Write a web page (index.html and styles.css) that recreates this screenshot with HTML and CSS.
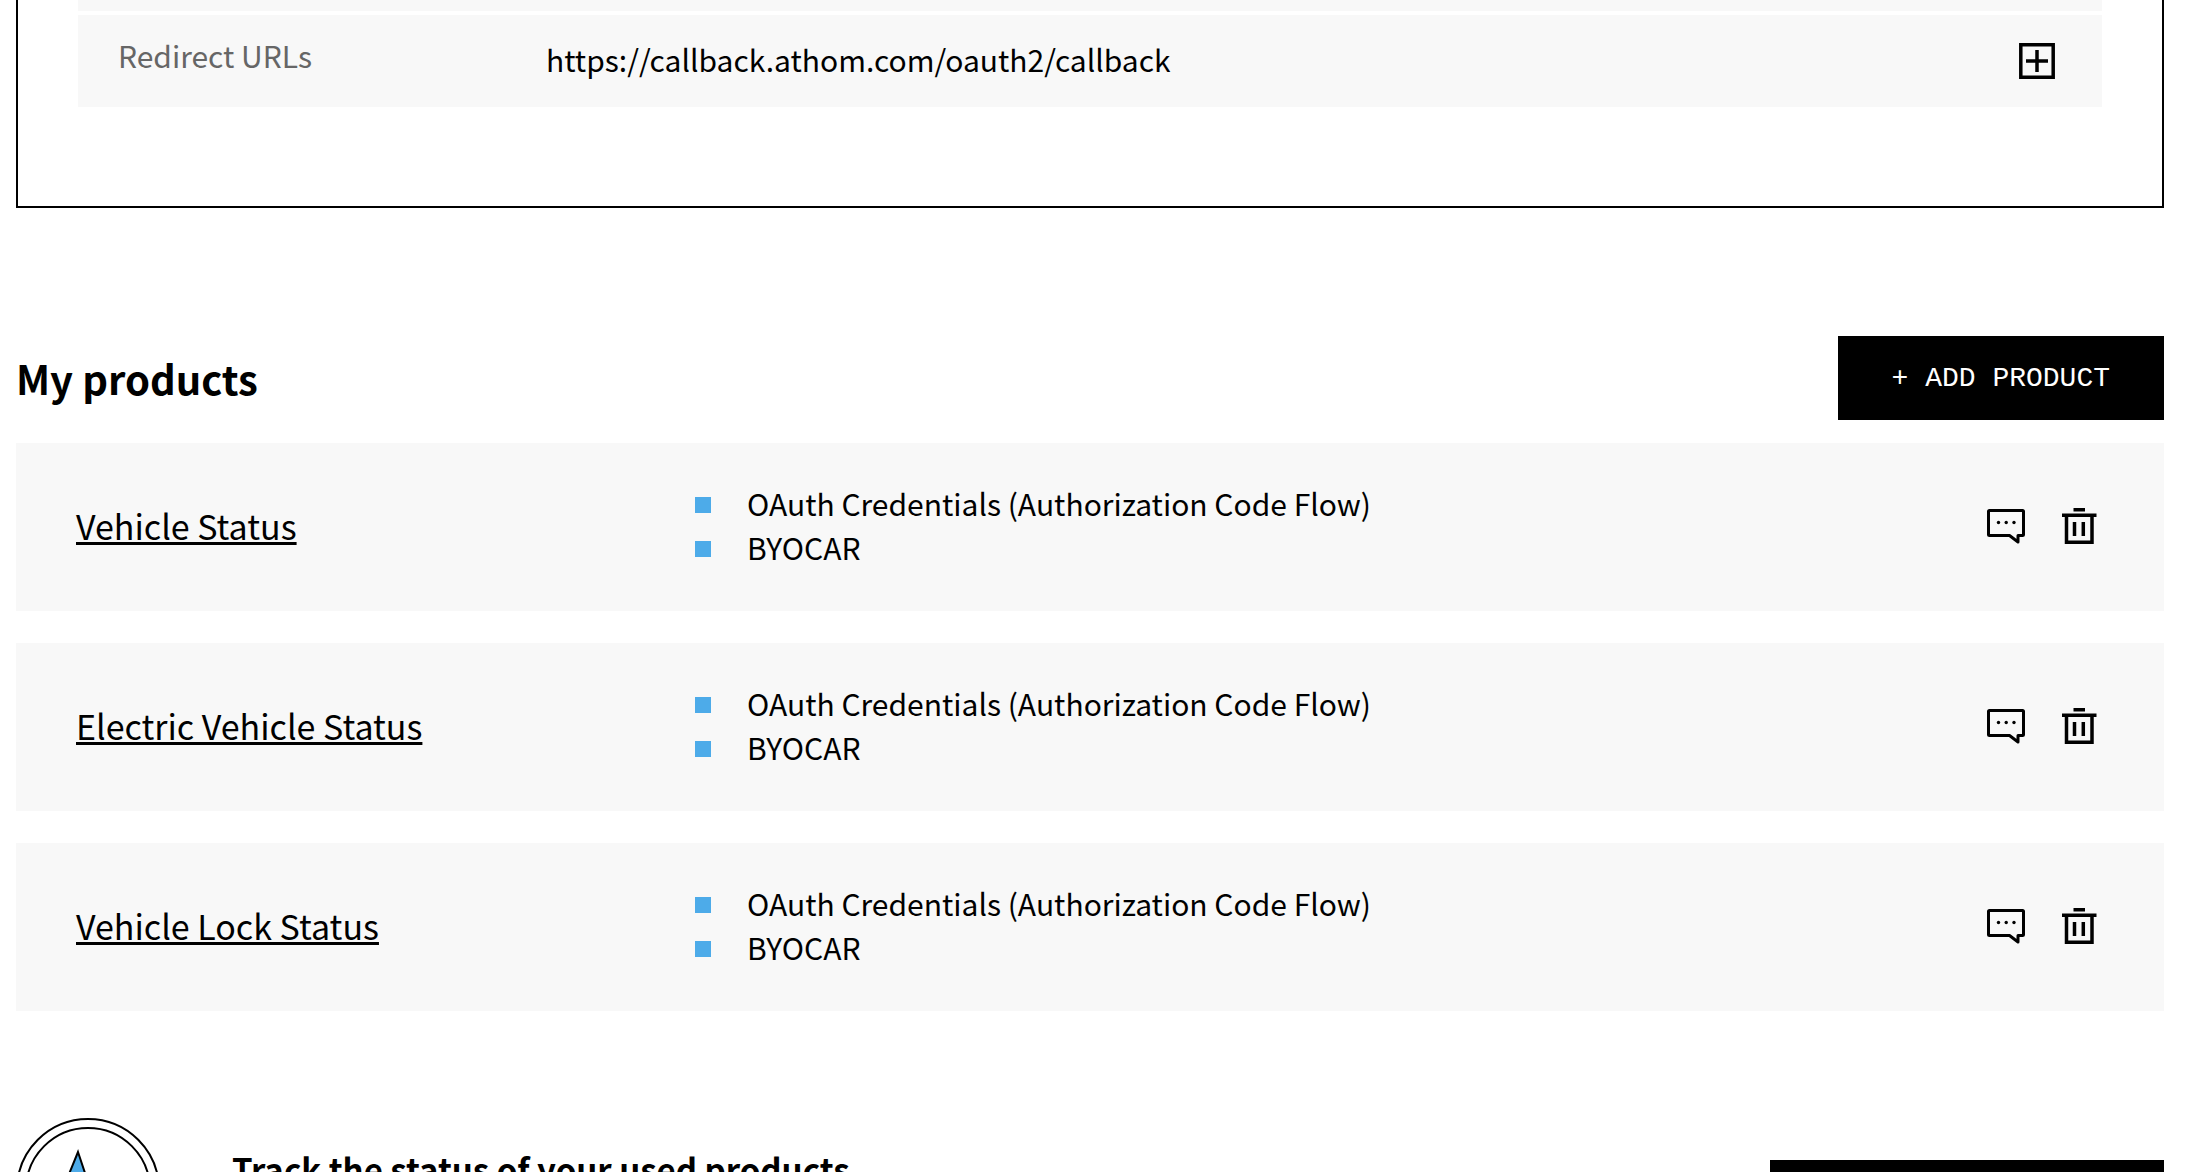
FILE: index.html
```html
<!DOCTYPE html>
<html lang="en">
<head>
    <meta charset="UTF-8">
    <meta name="viewport" content="width=device-width, initial-scale=1.0">
    <title>My products</title>
    <link rel="stylesheet" href="styles.css">
</head>
<body>
    <svg class="sprite" aria-hidden="true">
        <symbol id="icon-comment" viewBox="0 0 40 40">
            <path d="M3.500 3.500h33a1 1 0 0 1 1 1v23a1 1 0 0 1-1 1h-4.500v6.500l-8.500-6.500h-20a1 1 0 0 1-1-1v-23a1 1 0 0 1 1-1z" fill="none" stroke="currentColor" stroke-width="3" stroke-linejoin="round"/>
            <circle cx="12.500" cy="15.500" r="1.700"/>
            <circle cx="20.200" cy="15.500" r="1.700"/>
            <circle cx="28" cy="15.500" r="1.700"/>
        </symbol>
        <symbol id="icon-trash" viewBox="0 0 40 40">
            <path d="M14.500 1h11.500v3.500h-11.500zM3 6.500h34.500v3.500h-34.500z"/>
            <path d="M7.500 9v26.300h25.500v-26.300" fill="none" stroke="currentColor" stroke-width="3.500"/>
            <path d="M15.500 15v14M24.300 15v14" stroke="currentColor" stroke-width="3.500"/>
        </symbol>
    </svg>

    <main class="page">
        <section class="app-card">
            <div class="app-row app-row-previous"></div>
            <div class="app-row">
                <span class="app-label">Redirect URLs</span>
                <span class="app-value">https://callback.athom.com/oauth2/callback</span>
                <button class="icon-btn" aria-label="Add redirect URL">
                    <svg class="icon-plus" viewBox="0 0 36 36">
                        <path d="M1.800 1.800h32.400v32.400h-32.400zM18 7v22M7 18h22" fill="none" stroke="currentColor" stroke-width="3.500"/>
                    </svg>
                </button>
            </div>
        </section>

        <section class="products">
            <div class="products-header">
                <h2>My products</h2>
                <button class="btn">+ ADD PRODUCT</button>
            </div>

            <article class="product">
                <a class="product-name" href="#">Vehicle Status</a>
                <ul class="product-list">
                    <li>OAuth Credentials (Authorization Code Flow)</li>
                    <li>BYOCAR</li>
                </ul>
                <div class="product-actions">
                    <button class="icon-btn" aria-label="Feedback"><svg class="icon"><use href="#icon-comment"/></svg></button>
                    <button class="icon-btn" aria-label="Delete"><svg class="icon"><use href="#icon-trash"/></svg></button>
                </div>
            </article>

            <article class="product">
                <a class="product-name" href="#">Electric Vehicle Status</a>
                <ul class="product-list">
                    <li>OAuth Credentials (Authorization Code Flow)</li>
                    <li>BYOCAR</li>
                </ul>
                <div class="product-actions">
                    <button class="icon-btn" aria-label="Feedback"><svg class="icon"><use href="#icon-comment"/></svg></button>
                    <button class="icon-btn" aria-label="Delete"><svg class="icon"><use href="#icon-trash"/></svg></button>
                </div>
            </article>

            <article class="product">
                <a class="product-name" href="#">Vehicle Lock Status</a>
                <ul class="product-list">
                    <li>OAuth Credentials (Authorization Code Flow)</li>
                    <li>BYOCAR</li>
                </ul>
                <div class="product-actions">
                    <button class="icon-btn" aria-label="Feedback"><svg class="icon"><use href="#icon-comment"/></svg></button>
                    <button class="icon-btn" aria-label="Delete"><svg class="icon"><use href="#icon-trash"/></svg></button>
                </div>
            </article>
        </section>

        <section class="track">
            <svg class="track-gauge" viewBox="0 0 144 144" aria-hidden="true">
                <circle cx="72" cy="72" r="71" fill="none" stroke="#000" stroke-width="2"/>
                <circle cx="72" cy="72" r="62" fill="none" stroke="#000" stroke-width="2"/>
                <path d="M62 34l18 54h-40z" fill="#4dabe9" stroke="#000" stroke-width="2"/>
            </svg>
            <h3>Track the status of your used products</h3>
            <button class="btn track-btn" aria-label="Track status"></button>
        </section>
    </main>
</body>
</html>
```
FILE: styles.css
```css
* {
    box-sizing: border-box;
}
body {
    margin: 0;
    background: #fff;
    color: #000;
    font-family: "Noto Sans CJK SC", "Noto Sans", sans-serif;
    font-size: 30px;
    line-height: 44px;
}
h2, h3, ul {
    margin: 0;
    padding: 0;
}
.sprite {
    display: none;
}
.page {
    height: 100vh;
    overflow: hidden;
    padding: 0 22px 0 16px;
}

/* App details */
.app-card {
    border: 2px solid #000;
    border-top: none;
    padding: 0 60px 99px;
}
.app-row {
    display: flex;
    align-items: center;
    background: #f8f8f8;
    padding: 18px 47px 18px 40px;
}
.app-row-previous {
    height: 11px;
    padding: 0;
    margin-bottom: 4px;
}
.app-label {
    flex: 0 0 428px;
    padding-bottom: 12px;
    color: #666;
}
.app-value {
    flex: 1;
    padding-bottom: 4px;
}
.icon-btn {
    display: flex;
    border: none;
    background: none;
    padding: 0;
    color: #000;
    cursor: pointer;
}
.icon-plus {
    width: 36px;
    height: 36px;
}

/* Products */
.products-header {
    display: flex;
    align-items: center;
    justify-content: space-between;
    margin: 128px 0 23px;
}
.products-header h2 {
    font-size: 40px;
    font-weight: 700;
}
.btn {
    height: 84px;
    border: none;
    background: #000;
    padding: 0 54px;
    color: #fff;
    font-family: "Liberation Mono", monospace;
    font-size: 28px;
    cursor: pointer;
}
.product {
    display: flex;
    align-items: center;
    background: #f8f8f8;
    margin-bottom: 32px;
    padding: 40px 65px 40px 60px;
}
.product-name {
    flex: 0 0 619px;
    padding-bottom: 2px;
    color: #000;
    font-size: 34px;
    text-decoration-thickness: 3px;
    text-underline-offset: 2px;
}
.product-list {
    flex: 1;
    list-style: none;
}
.product-list li {
    display: flex;
    align-items: flex-start;
    gap: 36px;
    height: 44px;
    line-height: 40px;
}
.product-list li::before {
    content: "";
    width: 16px;
    height: 16px;
    margin-top: 14px;
    background: #4dabe9;
}
.product-actions {
    display: flex;
    gap: 33px;
}
.icon {
    width: 40px;
    height: 40px;
    fill: currentColor;
}

/* Status tracking */
.track {
    display: flex;
    align-items: flex-start;
    margin-top: 107px;
}
.track-gauge {
    flex: none;
    width: 144px;
    height: 144px;
}
.track h3 {
    flex: 1;
    padding: 29px 0 0 72px;
    font-size: 33px;
    font-weight: 700;
}
.track-btn {
    width: 394px;
    margin-top: 42px;
}
```
